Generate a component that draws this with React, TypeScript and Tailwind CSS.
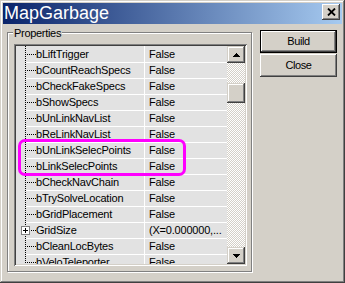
import React from "react";

const rows: { name: string; value: string; expand?: boolean }[] = [
  { name: "bLiftTrigger", value: "False" },
  { name: "bCountReachSpecs", value: "False" },
  { name: "bCheckFakeSpecs", value: "False" },
  { name: "bShowSpecs", value: "False" },
  { name: "bUnLinkNavList", value: "False" },
  { name: "bReLinkNavList", value: "False" },
  { name: "bUnLinkSelecPoints", value: "False" },
  { name: "bLinkSelecPoints", value: "False" },
  { name: "bCheckNavChain", value: "False" },
  { name: "bTrySolveLocation", value: "False" },
  { name: "bGridPlacement", value: "False" },
  { name: "GridSize", value: "(X=0.000000,...", expand: true },
  { name: "bCleanLocBytes", value: "False" },
  { name: "bVeloTeleporter", value: "False" },
];

const raisedScroll =
  "bg-[#d4d0c8] shadow-[inset_-1px_-1px_0_#404040,inset_1px_1px_0_#d4d0c8,inset_-2px_-2px_0_#808080,inset_2px_2px_0_#fff]";
const raisedBtn =
  "bg-[#d4d0c8] shadow-[inset_-1px_-1px_0_#404040,inset_1px_1px_0_#fff,inset_-2px_-2px_0_#808080,inset_2px_2px_0_#d4d0c8]";
const checker =
  "bg-[image:repeating-conic-gradient(#d4d0c8_0_25%,#ffffff_0_50%)] bg-[length:2px_2px]";

function Arrow({ up }: { up: boolean }) {
  return (
    <svg width="7" height="4" viewBox="0 0 7 4" shapeRendering="crispEdges">
      {up ? (
        <path d="M3 0h1v1h1v1h1v1h1v1H0V3h1V2h1V1h1z" fill="#000" />
      ) : (
        <path d="M0 0h7v1H6v1H5v1H4v1H3V3H2V2H1V1H0z" fill="#000" />
      )}
    </svg>
  );
}

export default function App() {
  return (
    <div className="relative w-[345px] h-[283px] overflow-hidden bg-[#d4d0c8] p-[3px] flex flex-col font-['Liberation_Sans',Arial,sans-serif] shadow-[inset_-1px_-1px_0_#404040,inset_1px_1px_0_#d4d0c8,inset_-2px_-2px_0_#808080,inset_2px_2px_0_#fff]">
      {/* Title bar */}
      <div className="h-[21px] flex items-start justify-between bg-[linear-gradient(to_right,#0a246a,#a6caf0)]">
        <span className="pl-[1px] text-[18px] leading-[21px] text-white whitespace-nowrap">MapGarbage</span>
        <div className={`mt-[1px] mr-[2px] w-[18px] h-[16px] flex items-center justify-center ${raisedBtn}`}>
          <svg width="9" height="8" viewBox="0 0 9 8">
            <path d="M1 0.5L8 7.5M8 0.5L1 7.5" stroke="#000" strokeWidth="1.8" />
          </svg>
        </div>
      </div>

      {/* Body */}
      <div className="flex items-start pt-[6px] pl-[4px]">
        {/* Group box */}
        <div className="relative mt-[2px] w-[245px] h-[240px] border border-[#808080] shadow-[1px_1px_0_#fff,inset_1px_1px_0_#fff] pl-[6px] pt-[11px]">
          <span className="absolute left-[5px] top-[-6px] px-[1px] bg-[#d4d0c8] text-[11px] leading-[13px] tracking-[-0.3px] text-black">
            Properties
          </span>

          {/* List box */}
          <div className="w-[233px] h-[222px] p-[2px] flex bg-[#d4d0c8] shadow-[inset_1px_1px_0_#808080,inset_-1px_-1px_0_#fff,inset_2px_2px_0_#404040,inset_-2px_-2px_0_#d4d0c8]">
            <div className="flex-1 overflow-hidden bg-[#e2e2e2] text-[11px] tracking-[-0.2px] text-black">
              {rows.map((r, i) => (
                <div key={r.name} className="relative flex h-[16px]">
                  <div className="w-[10px] h-full shrink-0">
                    <div className="ml-[9px] w-[1px] h-full bg-[image:repeating-linear-gradient(to_bottom,#000_0_1px,transparent_1px_2px)]" />
                  </div>
                  {r.expand && (
                    <div className="absolute left-[5px] top-[4px] w-[9px] h-[9px] border border-[#808080] bg-white flex items-center justify-center">
                      <div className="relative w-[5px] h-[5px]">
                        <div className="absolute left-0 top-[2px] w-[5px] h-[1px] bg-black" />
                        <div className="absolute left-[2px] top-0 w-[1px] h-[5px] bg-black" />
                      </div>
                    </div>
                  )}
                  <div
                    className={`w-[118px] shrink-0 flex items-center overflow-hidden ${
                      i === 0 ? "" : "border-t border-white"
                    }`}
                  >
                    <div className="ml-[1px] w-[9px] h-[1px] shrink-0 bg-[image:repeating-linear-gradient(to_right,#000_0_1px,transparent_1px_2px)]" />
                    <span className="whitespace-nowrap leading-[15px]">{r.name}</span>
                  </div>
                  <div
                    className={`flex-1 flex items-center overflow-hidden border-l border-white pl-[4px] ${
                      i === 0 ? "" : "border-t"
                    }`}
                  >
                    <span className="whitespace-nowrap leading-[15px]">{r.value}</span>
                  </div>
                </div>
              ))}
            </div>

            {/* Scrollbar */}
            <div className="w-[18px] flex flex-col shrink-0">
              <div className={`h-[17px] flex items-center justify-center ${raisedScroll}`}>
                <Arrow up />
              </div>
              <div className={`h-[20px] ${checker}`} />
              <div className={`h-[20px] ${raisedScroll}`} />
              <div className={`flex-1 ${checker}`} />
              <div className={`h-[17px] flex items-center justify-center ${raisedScroll}`}>
                <Arrow up={false} />
              </div>
            </div>
          </div>
        </div>

        {/* Buttons */}
        <div className="ml-[8px] flex flex-col gap-[1px] text-[11px] tracking-[-0.4px] text-black">
          <div className="w-[77px] h-[23px] border border-black">
            <div className={`w-full h-full flex items-center justify-center ${raisedBtn}`}>Build</div>
          </div>
          <div className={`w-[77px] h-[23px] flex items-center justify-center ${raisedBtn}`}>Close</div>
        </div>
      </div>

      {/* Magenta highlight */}
      <div className="absolute left-[18px] top-[139px] w-[168px] h-[37px] border-[3px] border-[#ff00ff] rounded-[7px] pointer-events-none" />
    </div>
  );
}
